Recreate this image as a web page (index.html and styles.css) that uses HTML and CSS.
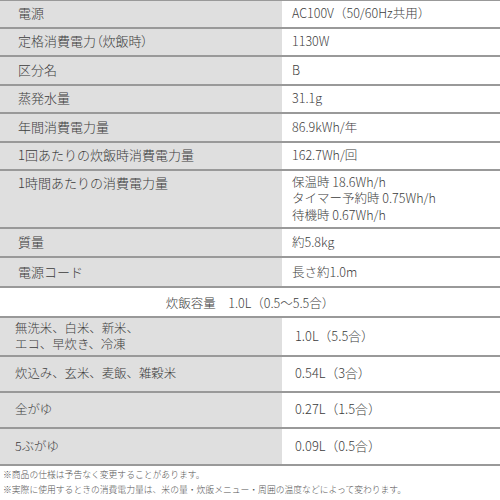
FILE: index.html
```html
<!DOCTYPE html>
<html lang="ja">
<head>
<meta charset="utf-8">
<link rel="stylesheet" href="styles.css">
</head>
<body>
<div class="spec">
  <div class="row h1 first"><div class="label">電源</div><div class="value">AC100V（50/60Hz共用）</div></div>
  <div class="row h1"><div class="label palt">定格消費電力（炊飯時）</div><div class="value">1130W</div></div>
  <div class="row h1"><div class="label">区分名</div><div class="value">B</div></div>
  <div class="row h1"><div class="label">蒸発水量</div><div class="value">31.1g</div></div>
  <div class="row h1"><div class="label">年間消費電力量</div><div class="value">86.9kWh/年</div></div>
  <div class="row h1"><div class="label">1回あたりの炊飯時消費電力量</div><div class="value">162.7Wh/回</div></div>
  <div class="row h3"><div class="label top">1時間あたりの消費電力量</div><div class="value multi">保温時 18.6Wh/h<br>タイマー予約時 0.75Wh/h<br>待機時 0.67Wh/h</div></div>
  <div class="row h1b"><div class="label">質量</div><div class="value">約5.8kg</div></div>
  <div class="row h1c"><div class="label">電源コード</div><div class="value">長さ約1.0m</div></div>
  <div class="row full h1c">炊飯容量　1.0L（0.5〜5.5合）</div>
  <div class="row lower l2"><div class="label multi2">無洗米、白米、新米、<br>エコ、早炊き、冷凍</div><div class="value">1.0L（5.5合）</div></div>
  <div class="row lower l1"><div class="label">炊込み、玄米、麦飯、雑穀米</div><div class="value">0.54L（3合）</div></div>
  <div class="row lower l1b"><div class="label">全がゆ</div><div class="value">0.27L（1.5合）</div></div>
  <div class="row lower l1b"><div class="label">5ぶがゆ</div><div class="value">0.09L（0.5合）</div></div>
</div>
<div class="notes">
  <p>※商品の仕様は予告なく変更することがあります。</p>
  <p>※実際に使用するときの消費電力量は、米の量・炊飯メニュー・周囲の温度などによって変わります。</p>
</div>
</body>
</html>
```
FILE: styles.css
```css
html, body {
  margin: 0;
  padding: 0;
  background: #fff;
}
body {
  width: 500px;
  font-family: "Noto Sans CJK JP", "Noto Sans", sans-serif;
  font-weight: 300;
  color: #3c3c3c;
  font-size: 12.5px;
}
.spec {
  border-top: 1px solid #999;
}
.row {
  display: grid;
  grid-template-columns: 282px 1fr;
  border-bottom: 2px solid #999;
  box-sizing: border-box;
}
.row.first { height: 27.5px; }
.h1 { height: 28.5px; }
.h3 { height: 57.5px; }
.h1b { height: 29.5px; }
.h1c { height: 30px; }
.l2 { height: 39px; }
.l1 { height: 35.5px; }
.l1b { height: 36.5px; }
.label {
  background: #dfdfdf;
  padding-left: 18px;
  display: flex;
  align-items: center;
  line-height: 16.7px;
  font-size: 13px;
}
.label.palt {
  font-feature-settings: "palt";
}
.label.top {
  align-items: flex-start;
  padding-top: 4px;
}
.value {
  padding-left: 10px;
  display: flex;
  align-items: center;
  line-height: 16.7px;
}
.row.full {
  display: flex;
  justify-content: center;
  align-items: center;
}
.lower .label {
  padding-left: 15px;
  font-size: 12.4px;
}
.lower .label.multi2 {
  line-height: 15.7px;
}
.lower .value {
  padding-left: 13px;
  font-size: 12.8px;
}
.notes {
  padding: 1px 0 0 3px;
  font-size: 8.8px;
  line-height: 15px;
  color: #555;
}
.notes p {
  margin: 0;
  white-space: nowrap;
}
```
